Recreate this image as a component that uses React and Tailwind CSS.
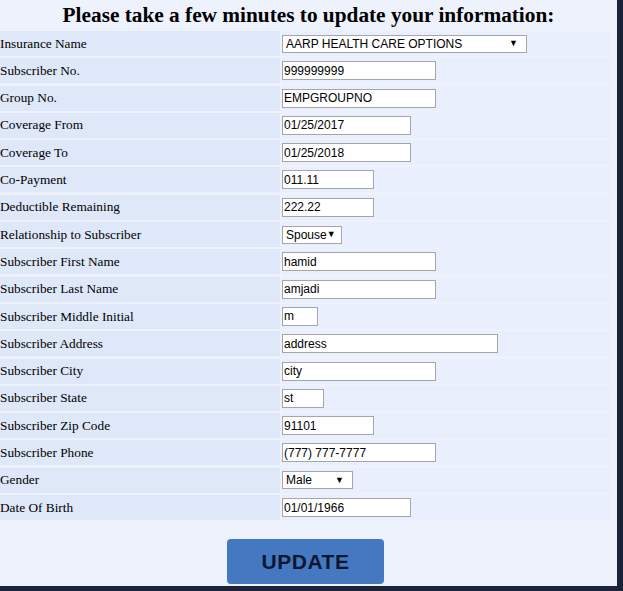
import React from 'react';

const ROWS = [
  { label: 'Insurance Name', value: 'AARP HEALTH CARE OPTIONS', w: 'w-[245px]', select: true },
  { label: 'Subscriber No.', value: '999999999', w: 'w-[154px]' },
  { label: 'Group No.', value: 'EMPGROUPNO', w: 'w-[154px]' },
  { label: 'Coverage From', value: '01/25/2017', w: 'w-[129px]' },
  { label: 'Coverage To', value: '01/25/2018', w: 'w-[129px]' },
  { label: 'Co-Payment', value: '011.11', w: 'w-[92px]' },
  { label: 'Deductible Remaining', value: '222.22', w: 'w-[92px]' },
  { label: 'Relationship to Subscriber', value: 'Spouse', w: 'w-[60px]', select: true },
  { label: 'Subscriber First Name', value: 'hamid', w: 'w-[154px]' },
  { label: 'Subscriber Last Name', value: 'amjadi', w: 'w-[154px]' },
  { label: 'Subscriber Middle Initial', value: 'm', w: 'w-[36px]' },
  { label: 'Subscriber Address', value: 'address', w: 'w-[216px]' },
  { label: 'Subscriber City', value: 'city', w: 'w-[154px]' },
  { label: 'Subscriber State', value: 'st', w: 'w-[42px]' },
  { label: 'Subscriber Zip Code', value: '91101', w: 'w-[92px]' },
  { label: 'Subscriber Phone', value: '(777) 777-7777', w: 'w-[154px]' },
  { label: 'Gender', value: 'Male', w: 'w-[71px]', select: true },
  { label: 'Date Of Birth', value: '01/01/1966', w: 'w-[129px]' },
];

function Field({ value, w, select }) {
  if (select) {
    return (
      <div className={`${w} h-[18px] flex items-center justify-between bg-white border border-[#a6a6a6] pl-[3px] pr-[8px] font-['Liberation_Sans',Arial,sans-serif] text-[12px] text-black leading-none`}>
        <span>{value}</span>
        <span className="text-[9px]">▼</span>
      </div>
    );
  }
  return (
    <input
      readOnly
      defaultValue={value}
      className={`${w} h-[19px] bg-white border border-[#a6a6a6] px-[1px] font-['Liberation_Sans',Arial,sans-serif] text-[12px] text-black leading-none outline-none`}
    />
  );
}

export default function App() {
  return (
    <div className="w-[623px] h-[591px] bg-[#eef2fd] border-r-[6px] border-b-[5px] border-[#1b2339] flex flex-col overflow-hidden font-['Liberation_Serif','Times_New_Roman',serif]">
      <h1 className="h-[31px] pt-[2px] text-center text-[21.3px] font-bold text-black leading-[26px]">
        Please take a few minutes to update your information:
      </h1>

      <div className="flex flex-col gap-[2.3px] pr-[6px]">
        {ROWS.map((r) => (
          <div key={r.label} className="flex h-[25px] gap-[2px]">
            <div className="w-[280px] shrink-0 flex items-center bg-[#dfe8f9] text-[13.3px] text-black">
              {r.label}
            </div>
            <div className="flex-1 flex items-center bg-[#e9effc]">
              <Field value={r.value} w={r.w} select={r.select} />
            </div>
          </div>
        ))}
      </div>

      <div className="flex justify-center pt-[19px] pr-[6px]">
        <button className="w-[157px] h-[45px] rounded-[4px] bg-[#4479c1] text-[#0c1630] font-['Liberation_Sans',Arial,sans-serif] font-bold text-[21px] tracking-[0.5px]">
          UPDATE
        </button>
      </div>
    </div>
  );
}
